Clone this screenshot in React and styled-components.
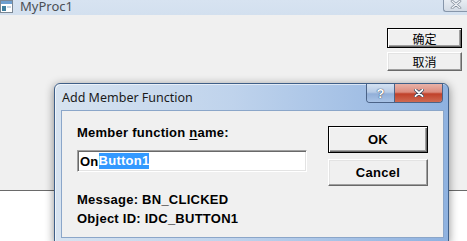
import styled, { createGlobalStyle } from "styled-components";

const GlobalStyle = createGlobalStyle`
  html, body {
    margin: 0;
    padding: 0;
    background: #fff;
    overflow: hidden;
  }
`;

const Screen = styled.div`
  position: relative;
  width: 467px;
  height: 241px;
  overflow: hidden;
  background: #fff;
  font-family: "Liberation Sans", Arial, sans-serif;
`;

const ParentWindow = styled.div`
  height: 191px;
  box-sizing: border-box;
  display: flex;
  flex-direction: column;
  background: #f0f0f0;
  border-bottom: 1px solid #6a6a6a;
`;

const ParentTitle = styled.div`
  height: 15px;
  flex-shrink: 0;
  display: flex;
  align-items: flex-start;
  background: linear-gradient(#d7e3f1, #d3e0ef);
  overflow: hidden;
`;

const ParentCaption = styled.span`
  margin: 0 0 0 6px;
  font-family: "Noto Sans", "Open Sans", sans-serif;
  font-size: 13px;
  line-height: 13px;
  color: #4b4f55;
`;

const ParentClose = styled.div`
  margin-left: auto;
  width: 24px;
  height: 12px;
  box-sizing: border-box;
  border: 1px solid #8796aa;
  border-top: none;
  border-right: none;
  border-radius: 0 0 0 3px;
  background: linear-gradient(#e8edf3, #d3dbe5);
  display: flex;
  align-items: flex-start;
  justify-content: center;
`;

const ParentBody = styled.div`
  flex: 1;
  display: flex;
  flex-direction: column;
  align-items: flex-end;
  gap: 4px;
  padding: 13px 5px 0 0;
`;

const ClassicButton = styled.button`
  width: ${(p) => p.$w}px;
  height: ${(p) => p.$h}px;
  box-sizing: border-box;
  padding: 0;
  margin: 0;
  background: #f0f0f0;
  border: 1px solid;
  border-color: ${(p) =>
    p.$default ? "#000" : "#fff #696969 #696969 #fff"};
  box-shadow: ${(p) =>
    p.$default
      ? "inset 1px 1px #fff, inset -1px -1px #696969, inset -2px -2px #a0a0a0"
      : "inset -1px -1px #a0a0a0, inset 1px 1px #e3e3e3"};
  font-family: ${(p) =>
    p.$cjk
      ? '"Noto Sans CJK SC", sans-serif'
      : '"Liberation Sans", Arial, sans-serif'};
  font-size: ${(p) => (p.$cjk ? 12 : 13)}px;
  font-weight: ${(p) => (p.$cjk ? 400 : 700)};
  letter-spacing: ${(p) => (p.$cjk ? 0 : 0.3)}px;
  color: #000;
  display: flex;
  align-items: center;
  justify-content: center;
`;

const Dialog = styled.div`
  position: absolute;
  left: 54px;
  top: 83px;
  width: 395px;
  height: 160px;
  box-sizing: border-box;
  display: flex;
  flex-direction: column;
  padding: 0 4px 4px 6px;
  border: 1px solid #3f5f88;
  border-radius: 6px 6px 0 0;
  background: linear-gradient(90deg, #d7e3f0 0%, #bfd3ec 45%, #8fb2e0 100%);
  box-shadow: 0 2px 10px rgba(0, 0, 0, 0.45),
    inset 1px 1px rgba(255, 255, 255, 0.6);
`;

const DialogTitle = styled.div`
  height: 26px;
  flex-shrink: 0;
  display: flex;
  align-items: flex-start;
`;

const TitleText = styled.span`
  margin: 6px 0 0 1px;
  font-family: "Noto Sans", "Open Sans", sans-serif;
  font-size: 12.5px;
  line-height: 16px;
  color: #1a1a1a;
`;

const CaptionButtons = styled.div`
  margin-left: auto;
  margin-right: 1px;
  display: flex;
  height: 18px;
  border: 1px solid #4b6387;
  border-top: none;
  border-radius: 0 0 4px 4px;
  overflow: hidden;
`;

const CaptionButton = styled.div`
  width: ${(p) => p.$w}px;
  height: 100%;
  display: flex;
  align-items: center;
  justify-content: center;
  background: ${(p) =>
    p.$red
      ? "linear-gradient(#e8b2a8 0%, #dc8c7e 45%, #c0412a 55%, #cf6a52 100%)"
      : "linear-gradient(#d4e1f1 0%, #b6cbe6 45%, #92afd8 55%, #a9c3e6 100%)"};
  border-right: ${(p) => (p.$red ? "none" : "1px solid #4b6387")};
  color: #fff;
  font-family: "Liberation Sans", Arial, sans-serif;
  font-weight: 700;
  font-size: 13px;
  text-shadow: 0 0 1px #2d3e57, 0 0 1px #2d3e57;
`;

const Client = styled.div`
  flex: 1;
  display: flex;
  gap: 21px;
  padding: 15px 0 0 15px;
  background: #f0f0f0;
  border: 1px solid #8ba6c9;
`;

const LeftColumn = styled.div`
  width: 230px;
  display: flex;
  flex-direction: column;
`;

const Label = styled.div`
  font-size: 13px;
  font-weight: 700;
  letter-spacing: 0.25px;
  line-height: 14px;
  color: #000;
  white-space: nowrap;
  & u {
    text-decoration-thickness: 1px;
    text-underline-offset: 2px;
  }
`;

const NameInput = styled.div`
  margin-top: 10px;
  height: 22px;
  box-sizing: border-box;
  display: flex;
  align-items: center;
  padding-left: 2px;
  background: #fff;
  border: 1px solid;
  border-color: #a0a0a0 #fff #fff #a0a0a0;
  box-shadow: inset 1px 1px #696969, inset -1px -1px #e3e3e3;
  font-size: 13px;
  font-weight: 700;
  letter-spacing: 0.25px;
  color: #000;
`;

const Selected = styled.span`
  background: #3399ff;
  color: #fff;
  line-height: 16px;
`;

const InfoBlock = styled.div`
  margin-top: 18px;
  display: flex;
  flex-direction: column;
`;

const InfoLine = styled(Label)`
  line-height: 19px;
`;

const RightColumn = styled.div`
  display: flex;
  flex-direction: column;
  gap: 6px;
`;

const WindowIcon = () => (
  <svg width="14" height="13" viewBox="0 0 14 13">
    <rect x="0.5" y="0.5" width="12" height="12" fill="#fff" stroke="#7b8794" />
    <rect x="1" y="1" width="11" height="3" fill="#6f9fcf" />
    <rect x="2" y="6" width="4" height="5" fill="#3f7f9f" />
    <rect x="7" y="6" width="4" height="2" fill="#c9d6e2" />
  </svg>
);

const CloseGlyph = ({ color = "#fff", size = 10 }) => (
  <svg width={size} height={size - 2} viewBox="0 0 10 8">
    <path
      d="M1.5 0.8 L8.5 7.2 M8.5 0.8 L1.5 7.2"
      stroke="#3a4a60"
      strokeWidth="3.2"
      strokeLinecap="round"
    />
    <path
      d="M1.5 0.8 L8.5 7.2 M8.5 0.8 L1.5 7.2"
      stroke={color}
      strokeWidth="1.8"
      strokeLinecap="round"
    />
  </svg>
);

export default function App() {
  return (
    <Screen>
      <GlobalStyle />
      <ParentWindow>
        <ParentTitle>
          <WindowIcon />
          <ParentCaption>MyProc1</ParentCaption>
          <ParentClose>
            <svg width="12" height="9" viewBox="0 0 12 9">
              <path
                d="M2 1 L10 8 M10 1 L2 8"
                stroke="#7f8a98"
                strokeWidth="2.6"
                strokeLinecap="round"
              />
              <path
                d="M2 1 L10 8 M10 1 L2 8"
                stroke="#f4f6f9"
                strokeWidth="1.2"
                strokeLinecap="round"
              />
            </svg>
          </ParentClose>
        </ParentTitle>
        <ParentBody>
          <ClassicButton $w={75} $h={20} $cjk $default>
            确定
          </ClassicButton>
          <ClassicButton $w={75} $h={19} $cjk>
            取消
          </ClassicButton>
        </ParentBody>
      </ParentWindow>

      <Dialog>
        <DialogTitle>
          <TitleText>Add Member Function</TitleText>
          <CaptionButtons>
            <CaptionButton $w={27}>?</CaptionButton>
            <CaptionButton $w={47} $red>
              <CloseGlyph />
            </CaptionButton>
          </CaptionButtons>
        </DialogTitle>
        <Client>
          <LeftColumn>
            <Label>
              Member function <u>n</u>ame:
            </Label>
            <NameInput>
              On<Selected>Button1</Selected>
            </NameInput>
            <InfoBlock>
              <InfoLine>Message: BN_CLICKED</InfoLine>
              <InfoLine>Object ID: IDC_BUTTON1</InfoLine>
            </InfoBlock>
          </LeftColumn>
          <RightColumn>
            <ClassicButton $w={100} $h={27} $default>
              OK
            </ClassicButton>
            <ClassicButton $w={100} $h={27}>
              Cancel
            </ClassicButton>
          </RightColumn>
        </Client>
      </Dialog>
    </Screen>
  );
}
